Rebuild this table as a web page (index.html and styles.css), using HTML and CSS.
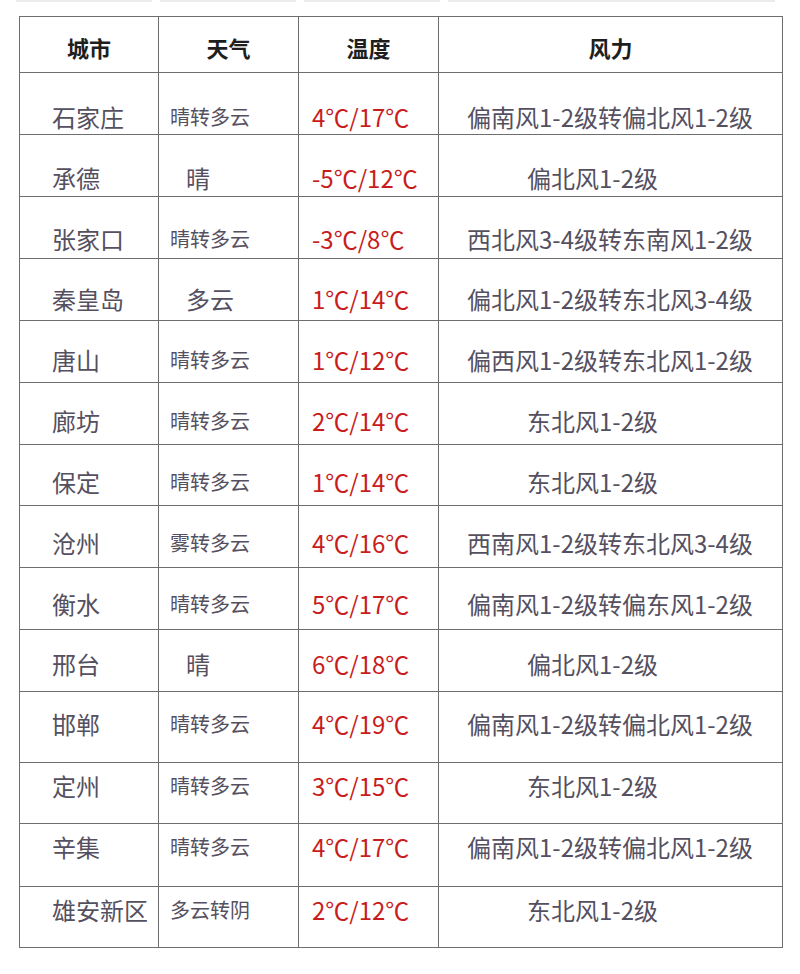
FILE: index.html
```html
<!DOCTYPE html>
<html lang="zh-CN">
<head>
<meta charset="utf-8">
<title>河北天气</title>
<link rel="stylesheet" href="styles.css">
</head>
<body>
<div class="topstrip"><span></span><span></span><span></span><span></span><span></span></div>
<table class="weather">
  <colgroup>
    <col class="c-city"><col class="c-wx"><col class="c-temp"><col class="c-wind">
  </colgroup>
  <thead>
    <tr><th>城市</th><th>天气</th><th>温度</th><th>风力</th></tr>
  </thead>
  <tbody>
    <tr class="r1"><td class="city">石家庄</td><td class="wx">晴转多云</td><td class="temp">4℃/17℃</td><td class="wind">偏南风1-2级转偏北风1-2级</td></tr>
    <tr class="r2"><td class="city">承德</td><td class="wx short">晴</td><td class="temp">-5℃/12℃</td><td class="wind short">偏北风1-2级</td></tr>
    <tr class="r3"><td class="city">张家口</td><td class="wx">晴转多云</td><td class="temp">-3℃/8℃</td><td class="wind">西北风3-4级转东南风1-2级</td></tr>
    <tr class="r4"><td class="city">秦皇岛</td><td class="wx short">多云</td><td class="temp">1℃/14℃</td><td class="wind">偏北风1-2级转东北风3-4级</td></tr>
    <tr class="r5"><td class="city">唐山</td><td class="wx">晴转多云</td><td class="temp">1℃/12℃</td><td class="wind">偏西风1-2级转东北风1-2级</td></tr>
    <tr class="r6"><td class="city">廊坊</td><td class="wx">晴转多云</td><td class="temp">2℃/14℃</td><td class="wind short">东北风1-2级</td></tr>
    <tr class="r7"><td class="city">保定</td><td class="wx">晴转多云</td><td class="temp">1℃/14℃</td><td class="wind short">东北风1-2级</td></tr>
    <tr class="r8"><td class="city">沧州</td><td class="wx">雾转多云</td><td class="temp">4℃/16℃</td><td class="wind">西南风1-2级转东北风3-4级</td></tr>
    <tr class="r9"><td class="city">衡水</td><td class="wx">晴转多云</td><td class="temp">5℃/17℃</td><td class="wind">偏南风1-2级转偏东风1-2级</td></tr>
    <tr class="r10"><td class="city">邢台</td><td class="wx short">晴</td><td class="temp">6℃/18℃</td><td class="wind short">偏北风1-2级</td></tr>
    <tr class="r11"><td class="city">邯郸</td><td class="wx">晴转多云</td><td class="temp">4℃/19℃</td><td class="wind">偏南风1-2级转偏北风1-2级</td></tr>
    <tr class="r12"><td class="city">定州</td><td class="wx">晴转多云</td><td class="temp">3℃/15℃</td><td class="wind short">东北风1-2级</td></tr>
    <tr class="r13"><td class="city">辛集</td><td class="wx">晴转多云</td><td class="temp">4℃/17℃</td><td class="wind">偏南风1-2级转偏北风1-2级</td></tr>
    <tr class="r14"><td class="city">雄安新区</td><td class="wx">多云转阴</td><td class="temp">2℃/12℃</td><td class="wind short">东北风1-2级</td></tr>
  </tbody>
</table>
</body>
</html>
```

FILE: styles.css
```css
html, body {
  margin: 0;
  padding: 0;
  background: #ffffff;
}
body {
  width: 800px;
  height: 974px;
  overflow: hidden;
  font-family: "Noto Sans CJK SC", "Noto Sans", sans-serif;
}
.topstrip {
  display: flex;
  height: 2px;
  gap: 8px;
  padding: 0 25px 0 8px;
}
.topstrip span {
  flex: 1;
  background: #ececec;
}
.topstrip span:first-child { flex: 0 0 0; }
.topstrip span:last-child { flex: 2.4; }

.weather {
  margin: 14px 0 0 19px;
  width: 763px;
  border-collapse: collapse;
  table-layout: fixed;
}
.c-city { width: 139px; }
.c-wx { width: 140px; }
.c-temp { width: 140px; }
.c-wind { width: 344px; }

.weather th, .weather td {
  border: 1px solid #6e6e6e;
  padding: 0;
  white-space: nowrap;
  vertical-align: top;
}
.weather thead tr { height: 56px; }
.weather th {
  font-size: 22px;
  font-weight: 700;
  color: #1e1e1e;
  text-align: center;
  line-height: 30px;
  padding-top: 15px;
}
.weather td {
  line-height: 30px;
  color: #55505f;
  font-size: 24px;
  text-align: left;
}
.weather td.city { padding-left: 32px; }
.weather td.wx { font-size: 20px; padding-left: 11px; }
.weather td.wx.short { font-size: 24px; padding-left: 27px; }
.weather td.temp { color: #c81d1d; padding-left: 13px; }
.weather td.wind { padding-left: 28px; }
.weather td.wind.short { padding-left: 88px; }

.r1 { height: 62px; } .r1 td { padding-top: 29px; }
.r2 { height: 62px; } .r2 td { padding-top: 28px; }
.r3 { height: 62px; } .r3 td { padding-top: 27px; }
.r4 { height: 62px; } .r4 td { padding-top: 25px; }
.r5 { height: 62px; } .r5 td { padding-top: 24px; }
.r6 { height: 62px; } .r6 td { padding-top: 23px; }
.r7 { height: 61px; } .r7 td { padding-top: 22px; }
.r8 { height: 62px; } .r8 td { padding-top: 22px; }
.r9 { height: 62px; } .r9 td { padding-top: 21px; }
.r10 { height: 62px; } .r10 td { padding-top: 19px; }
.r11 { height: 71px; } .r11 td { padding-top: 17px; }
.r12 { height: 61px; } .r12 td { padding-top: 8px; }
.r13 { height: 63px; } .r13 td { padding-top: 8px; }
.r14 { height: 61px; } .r14 td { padding-top: 8px; }

.weather td.wx { line-height: 30px; }
```
